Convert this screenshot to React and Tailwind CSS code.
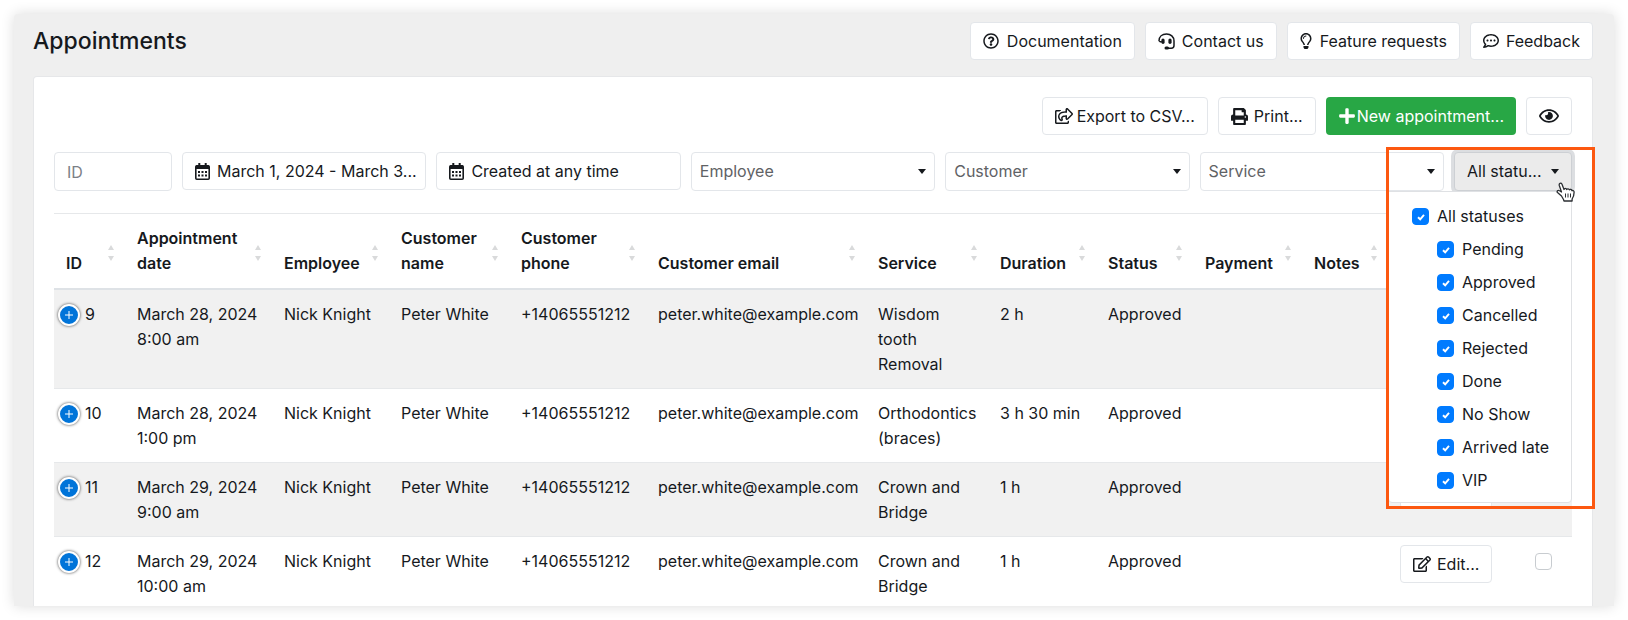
import { useState } from 'react';
import {
  FaRegQuestionCircle,
  FaRegLightbulb,
  FaRegCommentDots,
  FaRegShareSquare,
  FaPrint,
  FaPlus,
  FaRegEye,
  FaRegEdit,
} from 'react-icons/fa';

const STATUSES = ['Pending', 'Approved', 'Cancelled', 'Rejected', 'Done', 'No Show', 'Arrived late', 'VIP'];

const COLUMNS = [
  { label: 'ID', width: 'w-[71px]' },
  { label: 'Appointment date', width: 'w-[147px]' },
  { label: 'Employee', width: 'w-[117px]' },
  { label: 'Customer name', width: 'w-[120px]' },
  { label: 'Customer phone', width: 'w-[137px]' },
  { label: 'Customer email', width: 'w-[220px]' },
  { label: 'Service', width: 'w-[122px]' },
  { label: 'Duration', width: 'w-[108px]' },
  { label: 'Status', width: 'w-[97px]' },
  { label: 'Payment', width: 'w-[109px]' },
  { label: 'Notes', width: 'w-[86px]' },
];

const APPOINTMENTS = [
  { id: 9, date: 'March 28, 2024', time: '8:00 am', service: 'Wisdom tooth Removal', duration: '2 h' },
  { id: 10, date: 'March 28, 2024', time: '1:00 pm', service: 'Orthodontics (braces)', duration: '3 h 30 min' },
  { id: 11, date: 'March 29, 2024', time: '9:00 am', service: 'Crown and Bridge', duration: '1 h' },
  { id: 12, date: 'March 29, 2024', time: '10:00 am', service: 'Crown and Bridge', duration: '1 h' },
];

const button = 'flex h-[38px] items-center rounded border border-[#e3e6ea] bg-white px-3 whitespace-nowrap';
const cell = 'pt-3 pb-[11px] pl-3';

function SortArrows() {
  return (
    <svg className="h-4 w-[6px] shrink-0 fill-[#d9dadb]" viewBox="0 0 6 16" aria-hidden="true">
      <path d="M3 0 6 5H0zM3 16 0 11h6z" />
    </svg>
  );
}

function Caret({ className = '' }) {
  return (
    <svg className={`h-[5px] w-2 shrink-0 fill-current ${className}`} viewBox="0 0 8 5" aria-hidden="true">
      <path d="M0 0h8L4 5z" />
    </svg>
  );
}

function CalendarIcon() {
  return (
    <svg className="h-[17px] w-[15px] shrink-0" viewBox="0 0 15 17" aria-hidden="true">
      <rect x="0.8" y="2.8" width="13.4" height="13.4" rx="1" fill="none" stroke="currentColor" strokeWidth="1.6" />
      <path d="M1 2.500h13V6H1zM3.300 0h2v4h-2zM9.700 0h2v4h-2z" fill="currentColor" />
      <path d="M3 8h2v2H3zM6.500 8h2v2h-2zM10 8h2v2h-2zM3 11.500h2v2H3zM6.500 11.500h2v2h-2zM10 11.500h2v2h-2z" fill="currentColor" />
    </svg>
  );
}

function SupportIcon() {
  return (
    <svg className="size-[17px] shrink-0" viewBox="0 0 17 17" aria-hidden="true">
      <path d="M1 8C1 3.500 4.300 1 8.500 1S16 3.800 16 8v4.500c0 1.600-1 2.700-2.700 2.700H9.500" fill="none" stroke="currentColor" strokeWidth="1.500" />
      <rect x="3.400" y="5.500" width="3.200" height="5.400" rx="1.600" fill="currentColor" />
      <rect x="10.400" y="5.500" width="3.200" height="5.400" rx="1.600" fill="currentColor" />
      <rect x="6.500" y="13.600" width="4.500" height="3" rx="1.500" fill="currentColor" />
      <path d="M.4 8h3.500v1.500H2z" fill="currentColor" />
    </svg>
  );
}

function Checkbox({ label, checked, onChange }) {
  return (
    <label className="flex h-[33px] items-center gap-2">
      <span className="relative flex size-[17px] items-center justify-center">
        <input type="checkbox" checked={checked} onChange={onChange}
          className="size-[17px] appearance-none rounded border border-[#adb5bd] bg-white checked:border-[#007bff] checked:bg-[#007bff]" />
        {checked && (
          <svg className="pointer-events-none absolute size-2" viewBox="0 0 8 8" aria-hidden="true">
            <path d="M1 4.200 3.200 6.300 7 1.800" fill="none" stroke="#fff" strokeWidth="1.900" />
          </svg>
        )}
      </span>
      {label}
    </label>
  );
}

function FilterSelect({ label }) {
  return (
    <div className="relative">
      <select aria-label={label} className="h-[39px] w-full appearance-none rounded border border-[#e3e6ea] bg-white px-2 text-[#5f6265]">
        <option>{label}</option>
      </select>
      <Caret className="pointer-events-none absolute top-[17px] right-[9px]" />
    </div>
  );
}

export default function App() {
  const [selected, setSelected] = useState(STATUSES);

  const toggle = (status) => {
    setSelected(selected.includes(status) ? selected.filter((s) => s !== status) : [...selected, status]);
  };

  return (
    <div className="h-screen overflow-hidden bg-white p-[14px] font-['Inter',sans-serif] text-[16px] leading-[25px] text-[#16191d]">
      <div className="h-full rounded-t-sm bg-[#efefef] shadow-[0_0_14px_rgba(0,0,0,0.14)]">
        <div className="flex h-full flex-col overflow-hidden pr-[21px] pl-[19px]">
          <header className="flex items-center justify-between py-2">
            <h1 className="text-[23px] font-medium">Appointments</h1>
            <nav className="flex gap-[10px]">
              <a href="#docs" className={`${button} gap-2`}><FaRegQuestionCircle size={16} /> Documentation</a>
              <a href="#contact" className={`${button} gap-[7px]`}><SupportIcon /> Contact us</a>
              <a href="#features" className={`${button} gap-2`}><FaRegLightbulb className="h-4 w-3" /> Feature requests</a>
              <a href="#feedback" className={`${button} gap-[7px]`}><FaRegCommentDots size={16} /> Feedback</a>
            </nav>
          </header>

          <main className="mt-2 flex-1 rounded-t border border-b-0 border-[#e6e7e9] bg-white px-5 pt-5">
            <div className="flex justify-end gap-[10px]">
              <button type="button" className={`${button} gap-1`}><FaRegShareSquare size={18} /> Export to CSV...</button>
              <button type="button" className={`${button} gap-[6px]`}><FaPrint size={17} /> Print...</button>
              <button type="button" className="flex h-[38px] items-center gap-px rounded bg-[#28a745] px-3 whitespace-nowrap text-white">
                <FaPlus size={18} /> New appointment...
              </button>
              <button type="button" aria-label="Columns" className={button}><FaRegEye size={20} /></button>
            </div>

            <div className="relative mt-[17px] grid grid-cols-[118px_repeat(5,minmax(0,1fr))_118px] gap-[10px]">
              <input type="text" aria-label="ID" placeholder="ID"
                className="h-[39px] w-full rounded border border-[#e3e6ea] bg-white px-3 placeholder:text-[#7b8086]" />
              <button type="button" className={`${button} gap-[7px]`}><CalendarIcon /> March 1, 2024 - March 3...</button>
              <button type="button" className={`${button} gap-[7px]`}><CalendarIcon /> Created at any time</button>
              <FilterSelect label="Employee" />
              <FilterSelect label="Customer" />
              <FilterSelect label="Service" />
              <button type="button" className="flex h-[39px] items-center justify-between rounded border border-[#cdd0d4] bg-[#ebebeb] px-3 whitespace-nowrap shadow-[0_0_0_3px_#dcdee1]">
                All statu... <Caret />
              </button>

              {/* status menu */}
              <div className="absolute top-[39px] right-0 z-10 w-[184px] rounded-b border border-[#dfe1e4] bg-white pt-2 pb-[5px] pl-[23px]">
                <Checkbox label="All statuses" checked={selected.length === STATUSES.length}
                  onChange={() => setSelected(selected.length === STATUSES.length ? [] : STATUSES)} />
                <div className="pl-[25px]">
                  {STATUSES.map((status) => (
                    <Checkbox key={status} label={status} checked={selected.includes(status)} onChange={() => toggle(status)} />
                  ))}
                </div>
              </div>
              {/* highlight frame */}
              <div className="pointer-events-none absolute -top-[5px] -right-[23px] z-20 h-[362px] w-[209px] border-[3px] border-[#fc5810]" />
              <svg className="pointer-events-none absolute top-[30px] -right-[3px] z-30 h-5 w-[19px]" viewBox="0 0 19 20" aria-hidden="true">
                <path d="M7.500 17.500 5.500 14 1.500 10.500c-1-1.200.5-2.800 2-1.700L5.500 10 3.300 3.500C2.700 1.300 5 .3 6 2.300L8 7.500c.3-1.500 2.300-1.500 2.700 0 .5-1 2.300-1 2.700.3.800-.8 2.200-.4 2.500.8 1.200-.4 2.200.3 2.200 1.600 0 3-.5 4.500-2 6.800v2H8z"
                  fill="#fff" stroke="#2b2e32" strokeWidth="1.300" strokeLinejoin="round" />
                <path d="M9.500 11.500v4M12 11.500v4M14.500 11.500v4" stroke="#2b2e32" />
              </svg>
            </div>

            <table className="mt-[22px] w-full table-fixed border-t border-[#e6e8ea]">
              <thead>
                <tr className="border-b-2 border-[#dee2e6] text-left align-bottom">
                  {COLUMNS.map((col) => (
                    <th key={col.label} className={`${col.width} relative py-3 pl-3 font-semibold`}>
                      <div className="pr-5">{col.label}</div>
                      <span className="absolute top-[31px] right-[11px]"><SortArrows /></span>
                    </th>
                  ))}
                  <th className="w-[123px]" aria-label="Actions" />
                  <th aria-label="Select" />
                </tr>
              </thead>
              <tbody>
                {APPOINTMENTS.map((item) => (
                  <tr key={item.id} className="border-b border-[#e6e8ea] align-top odd:bg-[#f1f1f1]">
                    <td className="pt-3 pl-1">
                      <div className="flex items-center gap-[5px]">
                        <button type="button" aria-label={`Expand ${item.id}`}
                          className="flex size-[22px] items-center justify-center rounded-full border-2 border-white bg-[#0074d9] text-white shadow-[0_0_3px_#444]">
                          <svg className="size-[10px]" viewBox="0 0 10 10" aria-hidden="true"><path d="M5 1v8M1 5h8" stroke="currentColor" /></svg>
                        </button>
                        {item.id}
                      </div>
                    </td>
                    <td className={cell}>{item.date}<br />{item.time}</td>
                    <td className={cell}>Nick Knight</td>
                    <td className={cell}>Peter White</td>
                    <td className={cell}>+14065551212</td>
                    <td className={cell}>peter.white@example.com</td>
                    <td className={`${cell} pr-3`}>{item.service}</td>
                    <td className={cell}>{item.duration}</td>
                    <td className={cell}>Approved</td>
                    <td />
                    <td />
                    <td className="pt-2 pl-3">
                      <button type="button" className={`${button} gap-[6px]`}><FaRegEdit size={18} /> Edit...</button>
                    </td>
                    <td className="pt-4 pl-6">
                      <input type="checkbox" aria-label={`Select ${item.id}`} className="block size-[17px] appearance-none rounded border border-[#c8ccd0] bg-white" />
                    </td>
                  </tr>
                ))}
              </tbody>
            </table>
          </main>
        </div>
      </div>
    </div>
  );
}
